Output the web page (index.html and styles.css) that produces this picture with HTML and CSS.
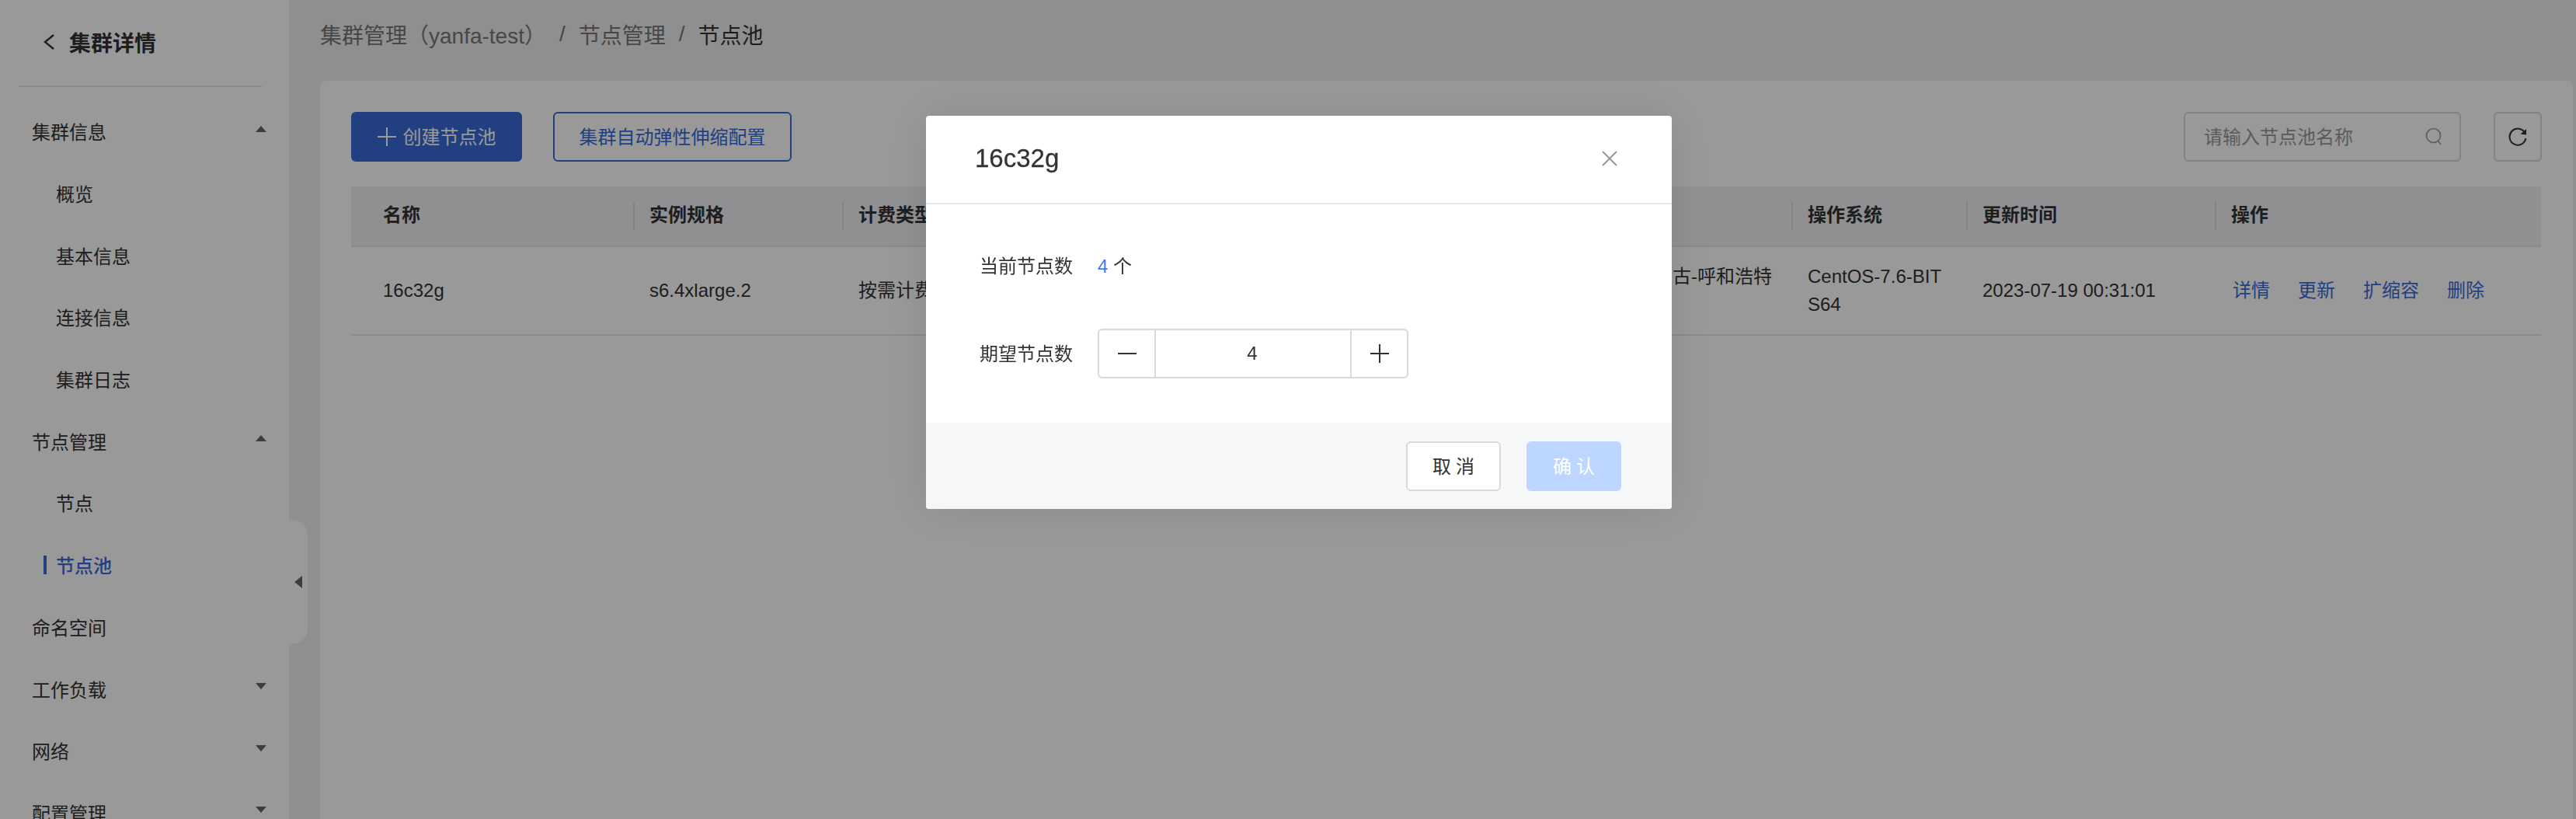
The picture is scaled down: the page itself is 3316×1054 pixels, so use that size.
FILE: index.html
```html
<!DOCTYPE html>
<html lang="zh-CN">
<head>
    <meta charset="UTF-8">
    <title>节点池</title>
    <link rel="stylesheet" href="styles.css">
</head>
<body>
    <div class="app">
        <aside class="sidebar">
            <div class="side-title">
                <svg class="back-icon" viewBox="0 0 16 22"><path d="M14 2 L3 11 L14 20" fill="none" stroke="#333" stroke-width="2.4"/></svg>
                <span>集群详情</span>
            </div>
            <ul class="menu">
                <li class="menu-item"><span>集群信息</span><i class="arrow arrow-up"></i></li>
                <li class="menu-item sub"><span>概览</span></li>
                <li class="menu-item sub"><span>基本信息</span></li>
                <li class="menu-item sub"><span>连接信息</span></li>
                <li class="menu-item sub"><span>集群日志</span></li>
                <li class="menu-item"><span>节点管理</span><i class="arrow arrow-up"></i></li>
                <li class="menu-item sub"><span>节点</span></li>
                <li class="menu-item sub active"><span>节点池</span></li>
                <li class="menu-item"><span>命名空间</span></li>
                <li class="menu-item"><span>工作负载</span><i class="arrow arrow-down"></i></li>
                <li class="menu-item"><span>网络</span><i class="arrow arrow-down"></i></li>
                <li class="menu-item"><span>配置管理</span><i class="arrow arrow-down"></i></li>
            </ul>
            <div class="collapse-tab"><i class="arrow-left"></i></div>
        </aside>

        <main class="main">
            <div class="breadcrumb">
                <span>集群管理（yanfa-test）</span>
                <span class="sep">/</span>
                <span>节点管理</span>
                <span class="sep">/</span>
                <span class="current">节点池</span>
            </div>

            <section class="card">
                <div class="toolbar">
                    <div class="toolbar-left">
                        <button class="btn btn-primary">
                            <svg class="plus-icon" viewBox="0 0 24 24"><path d="M12 0 V24 M0 12 H24" stroke="currentColor" stroke-width="2" fill="none"/></svg>
                            创建节点池
                        </button>
                        <button class="btn btn-outline">集群自动弹性伸缩配置</button>
                    </div>
                    <div class="toolbar-right">
                        <div class="search">
                            <span class="search-text">请输入节点池名称</span>
                            <svg class="search-icon" viewBox="0 0 22 24"><circle cx="10.5" cy="10.5" r="9" fill="none" stroke="currentColor" stroke-width="1.6"/><path d="M16.5 17.5 L20 22" stroke="currentColor" stroke-width="1.6"/></svg>
                        </div>
                        <button class="btn-refresh">
                            <svg viewBox="0 0 24 24" width="24" height="24"><path d="M21.5 7.5 A10.5 10.5 0 1 0 22.4 14" fill="none" stroke="#333" stroke-width="2"/><path d="M23 2 L23 9.5 L15.5 8.5 Z" fill="#333"/></svg>
                        </button>
                    </div>
                </div>

                <div class="table">
                    <div class="table-row table-head">
                        <div class="cell">名称</div>
                        <div class="cell">实例规格</div>
                        <div class="cell">计费类型</div>
                        <div class="cell"></div>
                        <div class="cell"></div>
                        <div class="cell"></div>
                        <div class="cell">操作系统</div>
                        <div class="cell">更新时间</div>
                        <div class="cell">操作</div>
                    </div>
                    <div class="table-row table-body">
                        <div class="cell">16c32g</div>
                        <div class="cell">s6.4xlarge.2</div>
                        <div class="cell">按需计费</div>
                        <div class="cell"></div>
                        <div class="cell"></div>
                        <div class="cell first-line">内蒙古-呼和浩特</div>
                        <div class="cell">CentOS-7.6-BIT<br>S64</div>
                        <div class="cell">2023-07-19 00:31:01</div>
                        <div class="cell links">
                            <a>详情</a>
                            <a>更新</a>
                            <a>扩缩容</a>
                            <a>删除</a>
                        </div>
                    </div>
                </div>
            </section>
        </main>
    </div>

    <div class="overlay">
        <div class="modal">
            <div class="modal-header">
                <h2>16c32g</h2>
                <svg class="close-icon" viewBox="0 0 20 20"><path d="M1 1 L19 19 M19 1 L1 19" stroke="#999" stroke-width="2" fill="none"/></svg>
            </div>
            <div class="modal-body">
                <div class="field field-text">
                    <label>当前节点数</label>
                    <span class="field-value"><span class="count">4</span> 个</span>
                </div>
                <div class="field">
                    <label>期望节点数</label>
                    <div class="stepper">
                        <span class="step"><svg viewBox="0 0 24 24" width="24" height="24"><path d="M0 12 H24" stroke="#333" stroke-width="2"/></svg></span>
                        <span class="step-value">4</span>
                        <span class="step"><svg viewBox="0 0 24 24" width="24" height="24"><path d="M12 0 V24 M0 12 H24" stroke="#333" stroke-width="2"/></svg></span>
                    </div>
                </div>
            </div>
            <div class="modal-footer">
                <button class="btn-modal btn-cancel">取消</button>
                <button class="btn-modal btn-confirm">确认</button>
            </div>
        </div>
    </div>
</body>
</html>
```

FILE: styles.css
```css
* {
    box-sizing: border-box;
}
html, body {
    margin: 0;
    height: 100%;
    overflow: hidden;
}
body {
    font-family: "Liberation Sans", "Noto Sans CJK SC", sans-serif;
    font-size: 24px;
    color: #333;
}
button {
    font-family: inherit;
    font-size: 24px;
    cursor: pointer;
}

.app {
    display: flex;
    height: 100vh;
    background: #eeeeee;
}

/* sidebar */
.sidebar {
    position: relative;
    width: 372px;
    flex-shrink: 0;
    background: #ffffff;
}
.side-title {
    display: flex;
    align-items: center;
    gap: 18px;
    height: 112px;
    margin: 0 35px 0 24px;
    padding-left: 31px;
    padding-bottom: 2px;
    border-bottom: 2px solid #e6e6ee;
    font-size: 28px;
    font-weight: bold;
}
.back-icon {
    width: 16px;
    height: 22px;
}
.menu {
    list-style: none;
    margin: 17px 0 0;
    padding: 0;
}
.menu-item {
    position: relative;
    display: flex;
    align-items: center;
    justify-content: space-between;
    height: 79.7px;
    padding: 0 29px 0 41px;
    white-space: nowrap;
}
.menu-item.sub {
    padding-left: 72px;
}
.menu-item.active {
    color: #3a6ad8;
    font-weight: 500;
}
.menu-item.active::before {
    content: "";
    position: absolute;
    left: 56px;
    top: 28px;
    width: 4px;
    height: 24px;
    background: #3a6ad8;
}
.arrow {
    width: 0;
    height: 0;
    border-left: 7px solid transparent;
    border-right: 7px solid transparent;
    margin-bottom: 6px;
}
.arrow-up {
    border-bottom: 8px solid #666;
}
.arrow-down {
    border-top: 8px solid #666;
}
.collapse-tab {
    position: absolute;
    left: 372px;
    top: 669px;
    display: flex;
    align-items: center;
    width: 24px;
    height: 160px;
    padding-left: 7px;
    background: #ffffff;
    border-radius: 0 20px 20px 0;
}
.arrow-left {
    border-top: 8px solid transparent;
    border-bottom: 8px solid transparent;
    border-right: 10px solid #666;
}

/* main */
.main {
    flex: 1;
    min-width: 0;
    padding: 0 4px 0 40px;
}
.breadcrumb {
    display: flex;
    align-items: center;
    gap: 17px;
    height: 104px;
    padding-bottom: 16px;
    font-size: 28px;
    color: #777;
}
.breadcrumb .current {
    color: #333;
}
.card {
    min-height: 1000px;
    padding: 40px;
    background: #ffffff;
    border-radius: 8px 8px 0 0;
}
.toolbar {
    display: flex;
    justify-content: space-between;
    height: 64px;
}
.toolbar-left, .toolbar-right {
    display: flex;
}
.toolbar-left {
    gap: 40px;
}
.toolbar-right {
    gap: 42px;
}
.btn {
    display: flex;
    align-items: center;
    justify-content: center;
    height: 64px;
    padding: 0 0 3px;
    border-radius: 6px;
    border: 2px solid #3a6ad8;
}
.btn-primary {
    gap: 9px;
    width: 220px;
    background: #3a6ad8;
    color: #ffffff;
}
.plus-icon {
    width: 24px;
    height: 24px;
    margin-top: 3px;
}
.btn-outline {
    width: 307px;
    background: #ffffff;
    color: #3a6ad8;
}
.search {
    display: flex;
    align-items: center;
    justify-content: space-between;
    width: 357px;
    padding: 0 22px 3px 24px;
    border: 2px solid #d9d9d9;
    border-radius: 6px;
    color: #999;
}
.search-icon {
    width: 22px;
    height: 24px;
    margin-top: 3px;
}
.btn-refresh {
    display: flex;
    align-items: center;
    justify-content: center;
    width: 62px;
    height: 64px;
    padding: 0;
    background: #ffffff;
    border: 2px solid #d9d9d9;
    border-radius: 6px;
}

/* table */
.table {
    width: 2819px;
    margin-top: 32px;
}
.table-row {
    display: grid;
    grid-template-columns: 363px 269px 416px 400px 184px 222px 225px 320px 420px;
    align-items: center;
}
.table-head {
    height: 78px;
    background: #f0f1f5;
    border-bottom: 2px solid #e6e6ee;
    font-weight: bold;
}
.table-body {
    height: 114px;
    border-bottom: 2px solid #e6e6ee;
    line-height: 36px;
}
.cell {
    position: relative;
    padding-left: 21px;
}
.cell:first-child {
    padding-left: 41px;
}
.table-head .cell {
    height: 36px;
    line-height: 34px;
}
.table-head .cell + .cell::before {
    content: "";
    position: absolute;
    left: 0;
    top: 0;
    width: 2px;
    height: 36px;
    background: #dcdde2;
}
.first-line {
    padding-bottom: 36px;
    white-space: nowrap;
}
.links {
    display: flex;
    gap: 36px;
    padding-left: 23px;
    color: #3a6ad8;
}

/* dialog */
.overlay {
    position: fixed;
    inset: 0;
    padding: 149px 0 0 1192px;
    background: rgba(0, 0, 0, 0.4);
}
.modal {
    width: 960px;
    height: 506px;
    display: flex;
    flex-direction: column;
    background: #ffffff;
    border-radius: 4px;
    box-shadow: 0 0 60px rgba(0, 0, 0, 0.1);
    overflow: hidden;
}
.modal-header {
    display: flex;
    align-items: center;
    justify-content: space-between;
    height: 115px;
    padding: 0 70px 2px 63px;
    border-bottom: 2px solid #e6e6f0;
}
.modal-header h2 {
    margin: 0;
    font-size: 33px;
    font-weight: normal;
    -webkit-text-stroke: 0.3px #333;
}
.close-icon {
    width: 20px;
    height: 20px;
}
.modal-body {
    flex: 1;
    padding: 55px 0 0 69px;
}
.field {
    display: flex;
    align-items: center;
    gap: 32px;
    height: 64px;
    margin-bottom: 57px;
}
.field-text {
    height: 48px;
}
.field label, .field-value {
    padding-bottom: 3px;
}
.count {
    color: #3f78f3;
}
.stepper {
    display: grid;
    grid-template-columns: 71px 1fr 71px;
    width: 400px;
    height: 64px;
    border: 2px solid #d9d9d9;
    border-radius: 6px;
}
.step, .step-value {
    display: flex;
    align-items: center;
    justify-content: center;
}
.step-value {
    padding-right: 2px;
    border-left: 2px solid #d9d9d9;
    border-right: 2px solid #d9d9d9;
}
.modal-footer {
    display: flex;
    justify-content: flex-end;
    gap: 33px;
    height: 112px;
    padding: 24px 65px 0 0;
    background: #f6f7f9;
}
.btn-modal {
    width: 122px;
    height: 64px;
    padding: 0 0 3px 6px;
    border-radius: 6px;
    letter-spacing: 6px;
}
.btn-cancel {
    background: #ffffff;
    border: 2px solid #d9d9d9;
    color: #333;
}
.btn-confirm {
    background: #bcd6ff;
    border: none;
    color: #ffffff;
}
```
